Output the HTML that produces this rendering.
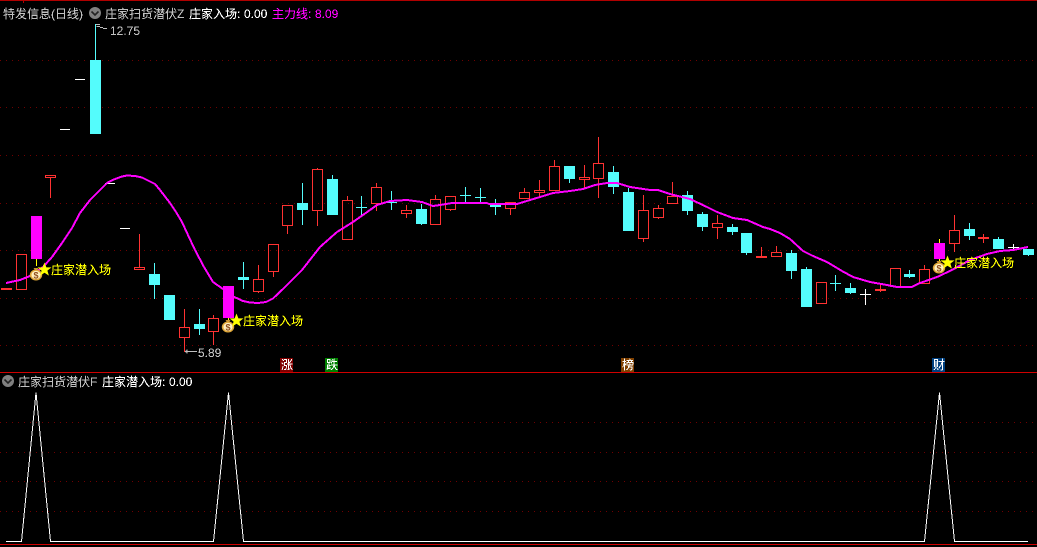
<!DOCTYPE html>
<html><head><meta charset="utf-8">
<style>
html,body{margin:0;padding:0;background:#000;width:1037px;height:547px;overflow:hidden}
svg{display:block}
text{font-family:"Liberation Sans","WenQuanYi Zen Hei","Noto Sans CJK SC",sans-serif;font-size:12px}
.g{fill:#c0c0c0}.w{fill:#fff}.m{fill:#ff00ff}.y{fill:#ffff00}
</style></head><body>
<svg width="1037" height="547" viewBox="0 0 1037 547" xmlns="http://www.w3.org/2000/svg">
<defs>
<filter id="px" x="0" y="0" width="1037" height="547" filterUnits="userSpaceOnUse" color-interpolation-filters="sRGB">
<feComponentTransfer><feFuncA type="discrete" tableValues="0 0 1 1 1"/></feComponentTransfer>
</filter>
</defs>
<rect width="1037" height="547" fill="#000"/>
<g shape-rendering="crispEdges">
<path d="M0 .5H1037M23.5 0V3" stroke="#b00000" fill="none"/>
<path d="M0 60.5H1037M0 107.5H1037M0 155.5H1037M0 203.5H1037M0 250.5H1037M0 298.5H1037M0 345.5H1037M0 422.5H1037M0 452.5H1037M0 481.5H1037M0 511.5H1037" stroke="#700000" stroke-dasharray="1 5" fill="none"/>
<path d="M0 372.5H1037M0 544.5H1037" stroke="#d00000" fill="none"/>
<path fill="none" stroke="#ff3232" d="M16.5 254.5H26.5V289.5H16.5ZM45.5 175.5H55.5V177.5H45.5ZM50.5 178V198M134.5 267.5H144.5V269.5H134.5ZM139.5 234V267M179.5 327.5H189.5V337.5H179.5ZM184.5 309V327M184.5 338V352M208.5 318.5H218.5V331.5H208.5ZM213.5 315V318M213.5 332V345M253.5 279.5H263.5V291.5H253.5ZM258.5 265V279M258.5 292V293M268.5 244.5H278.5V271.5H268.5ZM273.5 272V277M282.5 205.5H292.5V225.5H282.5ZM287.5 226V234M312.5 169.5H322.5V210.5H312.5ZM317.5 168V169M317.5 211V226M342.5 200.5H352.5V239.5H342.5ZM347.5 196V200M371.5 187.5H381.5V203.5H371.5ZM376.5 183V187M376.5 204V211M401.5 210.5H411.5V213.5H401.5ZM406.5 205V210M406.5 214V218M430.5 199.5H440.5V224.5H430.5ZM435.5 195V199M445.5 196.5H455.5V209.5H445.5ZM450.5 210V211M505.5 202.5H515.5V208.5H505.5ZM510.5 209V215M519.5 192.5H529.5V198.5H519.5ZM524.5 188V192M534.5 190.5H544.5V192.5H534.5ZM539.5 180V190M539.5 193V197M549.5 166.5H559.5V190.5H549.5ZM554.5 160V166M579.5 177.5H589.5V179.5H579.5ZM584.5 165V177M584.5 180V189M593.5 163.5H603.5V178.5H593.5ZM598.5 137V163M598.5 179V198M638.5 210.5H648.5V238.5H638.5ZM643.5 195V210M643.5 239V242M653.5 208.5H663.5V217.5H653.5ZM658.5 205V208M658.5 218V219M667.5 196.5H677.5V203.5H667.5ZM672.5 182V196M712.5 223.5H722.5V227.5H712.5ZM717.5 215V223M717.5 228V239M771.5 252.5H781.5V256.5H771.5ZM776.5 246V252M816.5 282.5H826.5V303.5H816.5ZM890.5 268.5H900.5V286.5H890.5ZM919.5 269.5H929.5V283.5H919.5ZM924.5 265V269M949.5 230.5H959.5V243.5H949.5ZM954.5 215V230M954.5 244V252M761.5 247V256M880.5 285V292M983.5 234V243"/>
<path fill="#ff3232" d="M1 288h11v2H1zM756 256h11v2h-11zM875 289h11v2h-11zM978 237h11v2h-11z"/>
<path fill="none" stroke="#54fcfc" d="M95.5 24V60M154.5 263V299M199.5 309V335M243.5 262V289M302.5 183V225M332.5 175V179M361.5 196V215M356 207.5H367M391.5 191V210M386 202.5H397M421.5 204V225M465.5 187V203M460 195.5H471M480.5 188V203M475 197.5H486M495.5 199V215M569.5 179V183M613.5 166V194M628.5 188V192M687.5 191V215M702.5 212V231M732.5 224V235M746.5 253V255M791.5 250V279M806.5 267V269M835.5 275V291M830 283.5H841M850.5 283V294M909.5 270V278M969.5 223V240M998.5 237V239M1028.5 249V256"/>
<path fill="#54fcfc" d="M90 60h11v74H90zM149 274h11v11h-11zM164 295h11v25h-11zM194 324h11v5h-11zM238 277h11v3h-11zM297 203h11v7h-11zM327 179h11v36h-11zM416 209h11v15h-11zM490 204h11v3h-11zM564 166h11v13h-11zM608 172h11v15h-11zM623 192h11v39h-11zM682 195h11v16h-11zM697 214h11v13h-11zM727 227h11v5h-11zM741 233h11v20h-11zM786 253h11v18h-11zM801 269h11v38h-11zM845 288h11v5h-11zM904 274h11v3h-11zM964 229h11v7h-11zM993 239h11v10h-11zM1023 249h11v6h-11z"/>
<path fill="none" stroke="#fff" d="M60 129.5H70M75 79.5H85M105 183.5H115M120 228.5H130M860 294.5H871M865.5 289V305M1008 247.5H1019M1013.5 244V250"/>
<path fill="none" stroke="#ffff00" d="M36.5 259V266M228.5 318V322M939.5 239V243M939.5 259V262"/>
<path fill="#ff00ff" d="M31 216h11v43H31zM223 286h11v32h-11zM934 243h11v16h-11z"/>
<polyline fill="none" stroke="#ff00ff" stroke-width="2" points="6,283 20,280 30,276 36,272 43,267 52,257 62,243 72,228 80,213 90,200 100,190 107,183 115,179 122,176.5 127,175.5 135,176 142,177.5 150,181.5 155,184 160,190 170,203 176,212 182,222 188,235 195,250 204,267 213,282 218,285.5 223,289 230,295 243,301 250,302.5 258,303 266,302 273,298.5 284,288 295,277 302,270 320,247 337,232 353,222 370,210 377,205 390,201 407,200 422,202 433,206 440,205 452,203 487,203 489,204 517,204 530,200 540,197 553,193 570,191 583,189 595,185 607,183 617,183 630,187 650,190 658,190 670,194 690,199 707,207 717,212 733,218 747,220 763,227 770,229 780,233 790,239 803,251 813,256 827,262 842,271 853,277 870,282 887,285 897,287 912,287 920,283 937,277 952,270 970,260 987,254 1000,251 1013,250 1028,247"/>
<polyline fill="none" stroke="#fff" points="6,541.5 21.5,541.5 36,392.5 50.5,541.5 213.5,541.5 228.5,392.5 243.5,541.5 924.5,541.5 939.5,392.5 954.5,541.5 1028,541.5"/>
<path fill="#800000" d="M280 358h13v14h-13z"/>
<path fill="#008000" d="M325 358h13v14h-13z"/>
<path fill="#804000" d="M621 358h13v14h-13z"/>
<path fill="#004080" d="M932 358h13v14h-13z"/>
<path fill="none" stroke="#c0c0c0" d="M96 24.5H100M96.5 26.5H100M100 27.5H103M103 28.5H107M185 351.5H197M186 350.5V352.5M187 349.5V353.5"/>
</g>

<!-- money bags -->
<g>
<g transform="translate(36 274)"><path d="M-2.5-6h5l-1.5 2.5h-2z" fill="#c89030"/><ellipse cx="0" cy="1" rx="6.2" ry="5.5" fill="#e0a838"/><ellipse cx="0" cy="1" rx="4.6" ry="4.1" fill="#fff0c0"/><text x="0" y="4.5" text-anchor="middle" style="font-size:9px;font-weight:bold" fill="#905020">$</text></g>
<g transform="translate(228 326)"><path d="M-2.5-6h5l-1.5 2.5h-2z" fill="#c89030"/><ellipse cx="0" cy="1" rx="6.2" ry="5.5" fill="#e0a838"/><ellipse cx="0" cy="1" rx="4.6" ry="4.1" fill="#fff0c0"/><text x="0" y="4.5" text-anchor="middle" style="font-size:9px;font-weight:bold" fill="#905020">$</text></g>
<g transform="translate(939 267)"><path d="M-2.5-6h5l-1.5 2.5h-2z" fill="#c89030"/><ellipse cx="0" cy="1" rx="6.2" ry="5.5" fill="#e0a838"/><ellipse cx="0" cy="1" rx="4.6" ry="4.1" fill="#fff0c0"/><text x="0" y="4.5" text-anchor="middle" style="font-size:9px;font-weight:bold" fill="#905020">$</text></g>
</g>

<!-- stars -->
<polygon points="44.5,262.5 46.4,267.4 51.5,267.4 47.4,270.6 48.9,275.6 44.5,272.7 40.1,275.6 41.6,270.6 37.5,267.4 42.6,267.4" fill="#ffff00"/>
<polygon points="236.5,313.5 238.4,318.4 243.5,318.4 239.4,321.6 240.9,326.6 236.5,323.7 232.1,326.6 233.6,321.6 229.5,318.4 234.6,318.4" fill="#ffff00"/>
<polygon points="947.5,255.5 949.4,260.4 954.5,260.4 950.4,263.6 951.9,268.6 947.5,265.7 943.1,268.6 944.6,263.6 940.5,260.4 945.6,260.4" fill="#ffff00"/>

<g filter="url(#px)">
<text x="51" y="274" class="y">庄家潜入场</text>
<text x="243" y="325" class="y">庄家潜入场</text>
<text x="954" y="267" class="y">庄家潜入场</text>

<text x="3" y="18" class="g">特发信息</text>
<text x="51" y="18" class="g">(日线)</text>
<text x="105" y="18" class="g">庄家扫货潜伏Z</text>
<text x="189" y="18" class="w">庄家入场:</text>
<text x="244" y="18" class="w">0.00</text>
<text x="272" y="18" class="m">主力线:</text>
<text x="315" y="18" class="m">8.09</text>
<text x="18" y="386" class="g">庄家扫货潜伏F</text>
<text x="102" y="386" class="w">庄家潜入场:</text>
<text x="169" y="386" class="w">0.00</text>
<text x="110" y="35" class="g">12.75</text>
<text x="198" y="357" class="g">5.89</text>
<text x="281" y="369" class="w">涨</text>
<text x="326" y="369" class="w">跌</text>
<text x="622" y="369" class="w">榜</text>
<text x="933" y="369" class="w">财</text>
</g>

<circle cx="95" cy="13" r="6" fill="#808080"/>
<path d="M91.5 11.5L95 15L98.5 11.5" fill="none" stroke="#222" stroke-width="1.6"/>
<circle cx="8" cy="381" r="6" fill="#808080"/>
<path d="M4.5 379.5L8 383L11.5 379.5" fill="none" stroke="#222" stroke-width="1.6"/>
</svg>
</body></html>
